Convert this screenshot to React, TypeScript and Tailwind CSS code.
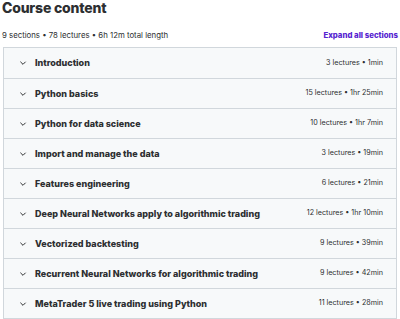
const sections = [
  { title: "Introduction", meta: "3 lectures • 1min" },
  { title: "Python basics", meta: "15 lectures • 1hr 25min" },
  { title: "Python for data science", meta: "10 lectures • 1hr 7min" },
  { title: "Import and manage the data", meta: "3 lectures • 19min" },
  { title: "Features engineering", meta: "6 lectures • 21min" },
  { title: "Deep Neural Networks apply to algorithmic trading", meta: "12 lectures • 1hr 10min" },
  { title: "Vectorized backtesting", meta: "9 lectures • 39min" },
  { title: "Recurrent Neural Networks for algorithmic trading", meta: "9 lectures • 42min" },
  { title: "MetaTrader 5 live trading using Python", meta: "11 lectures • 28min" },
];

function Chevron() {
  return (
    <svg width="8" height="8" viewBox="0 0 24 24" fill="none" stroke="#2d2f31" strokeWidth={3} strokeLinecap="round" strokeLinejoin="round">
      <path d="M5 9l7 7 7-7" />
    </svg>
  );
}

export default function App() {
  return (
    <div className="w-[400px] h-[319px] overflow-hidden bg-white text-[#2d2f31] font-['Inter','Liberation_Sans',sans-serif]">
      <h2 className="pl-[2px] text-[14px] leading-[16px] font-extrabold tracking-[-0.2px]">Course content</h2>
      <div className="flex items-center justify-between pl-[2px] pr-[2px] mt-[15px] h-[10px]">
        <span className="text-[7.8px]">9 sections • 78 lectures • 6h 12m total length</span>
        <span className="text-[7.8px] font-extrabold text-[#5624d0]">Expand all sections</span>
      </div>
      <div className="ml-[3px] mr-[3px] mt-[6px] border border-[#d1d7dc]">
        {sections.map((s, i) => (
          <div
            key={s.title}
            className={[
              "flex items-center h-[30px] bg-[#f7f9fa] pl-[15px] pr-[13px]",
              i > 0 ? "border-t border-[#d1d7dc]" : "",
            ].join(" ")}
          >
            <Chevron />
            <span className="ml-[8px] text-[9px] font-extrabold">{s.title}</span>
            <span className="ml-auto text-[7.2px]">{s.meta}</span>
          </div>
        ))}
      </div>
    </div>
  );
}
